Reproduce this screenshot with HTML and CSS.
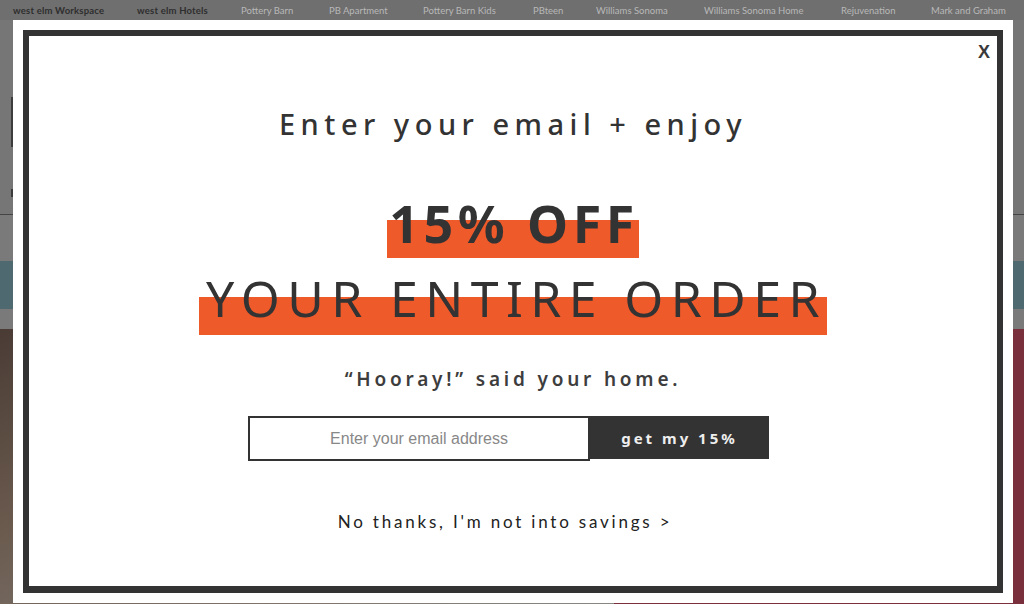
FILE: index.html
```html
<!DOCTYPE html>
<html lang="en">
<head>
<meta charset="utf-8">
<title>Email signup</title>
<link rel="stylesheet" href="styles.css">
</head>
<body>
<div class="page">
  <nav class="brands">
    <a class="brand strong">west elm Workspace</a>
    <a class="brand strong">west elm Hotels</a>
    <a class="brand">Pottery Barn</a>
    <a class="brand">PB Apartment</a>
    <a class="brand">Pottery Barn Kids</a>
    <a class="brand">PBteen</a>
    <a class="brand">Williams Sonoma</a>
    <a class="brand">Williams Sonoma Home</a>
    <a class="brand">Rejuvenation</a>
    <a class="brand">Mark and Graham</a>
  </nav>
  <header class="site-header">
    <div class="header-rule"></div>
    <div class="header-dot"></div>
  </header>
  <div class="header-gap"></div>
  <div class="promo-band"></div>
  <div class="promo-gap"></div>
  <div class="hero">
    <div class="hero-photo"></div>
    <div class="hero-panel"></div>
  </div>
</div>

<div class="modal">
  <div class="modal-frame">
    <button class="close">X</button>
    <h1 class="lead">Enter your email + enjoy</h1>
    <div class="offer"><span class="mark mark-small">15% OFF</span></div>
    <div class="offer"><span class="mark mark-big">YOUR ENTIRE ORDER</span></div>
    <p class="hooray">“Hooray!” said your home.</p>
    <form class="signup">
      <input class="email" type="text" placeholder="Enter your email address">
      <button class="submit" type="button">get my 15%</button>
    </form>
    <a class="decline">No thanks, I'm not into savings &gt;</a>
  </div>
</div>
</body>
</html>
```
FILE: styles.css
```css
html, body {
  margin: 0;
  padding: 0;
}
body {
  width: 1024px;
  height: 604px;
  overflow: hidden;
  position: relative;
  background: #747474;
  font-family: "Noto Sans", "Open Sans", sans-serif;
}
.page {
  display: flex;
  flex-direction: column;
  height: 604px;
}
.brands {
  display: flex;
  height: 20px;
  align-items: center;
  padding-left: 13px;
  background: #6f6f6f;
  font-family: "Lato", "Noto Sans", sans-serif;
  font-size: 9.5px;
}
.brand {
  color: #b8b8b8;
  white-space: nowrap;
}
.brand.strong {
  color: #2e2e2e;
  font-weight: 700;
  letter-spacing: 0.2px;
}
.brand:nth-child(1) { width: 124px; }
.brand:nth-child(2) { width: 104px; }
.brand:nth-child(3) { width: 88px; }
.brand:nth-child(4) { width: 94px; }
.brand:nth-child(5) { width: 110px; }
.brand:nth-child(6) { width: 63px; }
.brand:nth-child(7) { width: 108px; }
.brand:nth-child(8) { width: 137px; }
.brand:nth-child(9) { width: 90px; }
.site-header {
  height: 195px;
  box-sizing: border-box;
  padding: 77px 0 0 11px;
  background: #767676;
  border-bottom: 1px solid #444;
}
.header-rule {
  width: 2px;
  height: 50px;
  background: #3c3c3c;
}
.header-dot {
  width: 2px;
  height: 8px;
  margin-top: 42px;
  background: #3c3c3c;
}
.header-gap {
  height: 46px;
  background: #7a7a7a;
}
.promo-band {
  height: 48px;
  background: #4e6a70;
}
.promo-gap {
  height: 20px;
  background: #7a7a7a;
}
.hero {
  flex: 1;
  display: flex;
}
.hero-photo {
  flex: 1;
  background: linear-gradient(160deg, #4a3c35 0%, #6a5a4e 40%, #8a8682 100%);
}
.hero-panel {
  width: 40%;
  background: #7a2f3c;
}

.modal {
  position: absolute;
  left: 13px;
  top: 20px;
  width: 1000px;
  height: 583px;
  box-sizing: border-box;
  padding: 10px;
  background: #fff;
}
.modal-frame {
  position: relative;
  height: 100%;
  box-sizing: border-box;
  border: 6px solid #333;
  border-bottom-width: 7px;
  display: flex;
  flex-direction: column;
  align-items: center;
  color: #333;
  font-family: "Noto Sans", "Open Sans", sans-serif;
}
.close {
  position: absolute;
  top: 6px;
  right: 7px;
  border: 0;
  background: none;
  padding: 0;
  font-family: "Liberation Sans", sans-serif;
  font-weight: 700;
  font-size: 18px;
  color: #3a3a3a;
  cursor: pointer;
}
.lead {
  margin: 68px 0 0;
  font-size: 29px;
  line-height: 40px;
  font-weight: 500;
  letter-spacing: 5.5px;
  color: #333;
}
.offer {
  display: flex;
  justify-content: center;
  margin-top: 41px;
}
.offer + .offer {
  margin-top: -1px;
}
.mark {
  display: block;
  color: #333;
  white-space: nowrap;
}
.mark-small {
  font-size: 52px;
  line-height: 76px;
  font-weight: 700;
  letter-spacing: 4.5px;
  padding: 0 0 0 2px;
  background: linear-gradient(to bottom, transparent 0 35px, #ef5a2b 35px 73px, transparent 73px);
}
.mark-big {
  font-size: 50px;
  line-height: 76px;
  font-weight: 400;
  letter-spacing: 7.4px;
  padding: 0 0 0 7px;
  background: linear-gradient(to bottom, transparent 0 37px, #ef5a2b 37px 75px, transparent 75px);
}
.hooray {
  margin: 30px 0 0;
  font-size: 19px;
  line-height: 26px;
  font-weight: 600;
  letter-spacing: 3.8px;
  color: #3d3d3d;
}
.signup {
  display: flex;
  margin: 24px 0 0;
  padding-right: 9px;
}
.email {
  width: 342px;
  height: 45px;
  box-sizing: border-box;
  border: 2px solid #333;
  margin: 0;
  padding: 0;
  text-align: center;
  font-family: "Liberation Sans", Arial, sans-serif;
  font-size: 16px;
  color: #333;
  outline: none;
}
.email::placeholder {
  color: #888;
}
.submit {
  width: 179px;
  height: 43px;
  border: 0;
  margin: 0;
  background: #333;
  color: #eee;
  font-family: "Noto Sans", sans-serif;
  font-weight: 700;
  font-size: 15px;
  letter-spacing: 3px;
}
.decline {
  margin: 50px 16px 0 0;
  font-size: 17px;
  letter-spacing: 2.8px;
  color: #222;
  font-family: "Lato", "Noto Sans", sans-serif;
}
```
